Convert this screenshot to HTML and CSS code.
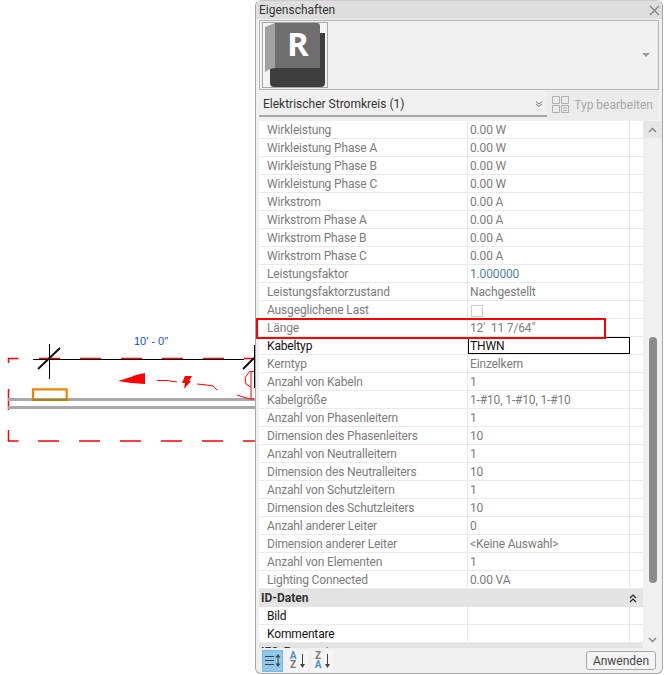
FILE: index.html
```html
<!DOCTYPE html>
<html lang="de">
<head>
    <meta charset="UTF-8">
    <title>Eigenschaften</title>
    <link rel="stylesheet" href="styles.css">
</head>
<body>
    <!-- Drawing area -->
    <div class="canvas">
        <svg class="drawing" width="255" height="675" viewBox="0 0 255 675">
            <g class="red-dash">
                <path d="M8.5 363V358.5H18.5M39 358.5H60M80 358.5H101M121 358.5H142M162 358.5H183M203 358.5H224M244 358.5H255"/>
                <path d="M8.5 389V410M8.5 430V441H18.5M38 441H59M79 441H100M120 441H141M161 441H182M202 441H223M243 441H255"/>
            </g>
            <path class="thin-black" d="M33 359.5H244M49.5 344V379M254.5 345V388"/>
            <path class="thick-black" d="M38 369L60 348M243 369L254 358"/>
            <rect class="wall" x="8" y="398" width="247" height="3"/>
            <rect class="wall" x="8" y="406" width="247" height="3"/>
            <path class="orange-top" d="M33 399V389.4H66.7V399"/>
            <path class="orange-bottom" d="M32 400H67.5"/>
            <polygon class="red-fill" points="118,381 131,377 136,375 145,373 145,384 131,383"/>
            <polygon class="red-fill" points="185,376 192,376 189,381 191,381 184,389 185,383 182,383"/>
            <path class="red-line" d="M157 380.5H167L177 382M197 384L207 385L213 386L217 390M237 395L250 399L254 399M254 371.5H249.5L245 378L246 384L250.5 387M251 371.5V399"/>
            <text class="dim-text" x="134" y="345">10' - 0"</text>
        </svg>
    </div>

    <!-- Properties palette -->
    <div class="palette">
        <div class="title-bar">
            <span>Eigenschaften</span>
            <svg class="close-icon" width="11" height="11" viewBox="0 0 11 11"><path d="M1 1L10 10M10 1L1 10"/></svg>
        </div>

        <div class="type-selector">
            <div class="type-thumb">
                <svg width="64" height="64" viewBox="0 0 64 64">
                    <path fill="#3e3e3e" d="M7 45H57V10H62V60Q62 64 58 64H11Q7 64 7 60Z"/>
                    <path fill="#6e6e6e" d="M12 0H54Q57 0 57 3V45H12Z"/>
                    <polygon fill="#a2a2a2" points="2,4 12,0 12,45 7,46 2,49"/>
                    <text class="logo-letter" x="24" y="33">R</text>
                </svg>
            </div>
            <span class="arrow-down"></span>
        </div>

        <div class="instance-row">
            <div class="instance-select">
                <span>Elektrischer Stromkreis (1)</span>
                <svg class="chevron" width="8" height="6" viewBox="0 0 8 6"><path d="M1 0.5L4 3L7 0.5M1 3L4 5.5L7 3"/></svg>
            </div>
            <div class="edit-type">
                <svg width="17" height="17" viewBox="0 0 17 17" class="edit-icon">
                    <path d="M0.5 0.5H7.5V7.5H0.5ZM9.5 0.5H16.5V7.5H9.5ZM0.5 9.5H7.5V16.5H0.5Z"/>
                    <path d="M9.5 9.5H16.5V16.5H9.5ZM11 12H15M11 14.5H15"/>
                </svg>
                <span>Typ bearbeiten</span>
            </div>
        </div>

        <div class="list-wrap">
            <div class="list">
                <div class="row"><div class="label">Wirkleistung</div><div class="value">0.00 W</div></div>
                <div class="row"><div class="label">Wirkleistung Phase A</div><div class="value">0.00 W</div></div>
                <div class="row"><div class="label">Wirkleistung Phase B</div><div class="value">0.00 W</div></div>
                <div class="row"><div class="label">Wirkleistung Phase C</div><div class="value">0.00 W</div></div>
                <div class="row"><div class="label">Wirkstrom</div><div class="value">0.00 A</div></div>
                <div class="row"><div class="label">Wirkstrom Phase A</div><div class="value">0.00 A</div></div>
                <div class="row"><div class="label">Wirkstrom Phase B</div><div class="value">0.00 A</div></div>
                <div class="row"><div class="label">Wirkstrom Phase C</div><div class="value">0.00 A</div></div>
                <div class="row"><div class="label">Leistungsfaktor</div><div class="value value-blue">1.000000</div></div>
                <div class="row"><div class="label">Leistungsfaktorzustand</div><div class="value">Nachgestellt</div></div>
                <div class="row"><div class="label">Ausgeglichene Last</div><div class="value"><span class="checkbox"></span></div></div>
                <div class="row"><div class="label">Länge</div><div class="value">12'&nbsp; 11 7/64"</div></div>
                <div class="row row-edit"><div class="label">Kabeltyp</div><div class="value">THWN</div></div>
                <div class="row"><div class="label">Kerntyp</div><div class="value">Einzelkern</div></div>
                <div class="row"><div class="label">Anzahl von Kabeln</div><div class="value">1</div></div>
                <div class="row"><div class="label">Kabelgröße</div><div class="value">1-#10, 1-#10, 1-#10</div></div>
                <div class="row"><div class="label">Anzahl von Phasenleitern</div><div class="value">1</div></div>
                <div class="row"><div class="label">Dimension des Phasenleiters</div><div class="value">10</div></div>
                <div class="row"><div class="label">Anzahl von Neutralleitern</div><div class="value">1</div></div>
                <div class="row"><div class="label">Dimension des Neutralleiters</div><div class="value">10</div></div>
                <div class="row"><div class="label">Anzahl von Schutzleitern</div><div class="value">1</div></div>
                <div class="row"><div class="label">Dimension des Schutzleiters</div><div class="value">10</div></div>
                <div class="row"><div class="label">Anzahl anderer Leiter</div><div class="value">0</div></div>
                <div class="row"><div class="label">Dimension anderer Leiter</div><div class="value">&lt;Keine Auswahl&gt;</div></div>
                <div class="row"><div class="label">Anzahl von Elementen</div><div class="value">1</div></div>
                <div class="row"><div class="label">Lighting Connected</div><div class="value">0.00 VA</div></div>
                <div class="group">
                    <span>ID-Daten</span>
                    <svg class="collapse" width="8" height="9" viewBox="0 0 8 9"><path d="M1 4L4 1L7 4M1 8L4 5L7 8"/></svg>
                </div>
                <div class="row row-active"><div class="label">Bild</div><div class="value"></div></div>
                <div class="row row-active"><div class="label">Kommentare</div><div class="value"></div></div>
                <div class="group"><span>IFC-Parameter</span></div>
            </div>
            <div class="scrollbar">
                <div class="scroll-btn"><svg width="9" height="6" viewBox="0 0 9 6"><path d="M1 5L4.5 1.5L8 5"/></svg></div>
                <div class="scroll-track"><div class="scroll-thumb"></div></div>
                <div class="scroll-btn"><svg width="9" height="6" viewBox="0 0 9 6"><path d="M1 1L4.5 4.5L8 1"/></svg></div>
            </div>
            <div class="highlight"></div>
        </div>

        <div class="tool-bar">
            <div class="tool tool-on">
                <svg width="17" height="15" viewBox="0 0 17 15"><path class="ic-dark" d="M1 3.5H10M1 7.5H10M1 11.5H10M14 2V13"/><path class="ic-fill" d="M11.5 4.5L14 1L16.5 4.5ZM11.5 10.5L14 14L16.5 10.5Z"/></svg>
            </div>
            <div class="tool tool-sort">
                <div class="sort-letters"><span class="az-blue">A</span><span class="az-gray">Z</span></div>
                <svg width="7" height="16" viewBox="0 0 7 16"><path class="ic-dark" d="M3.5 1V12"/><path class="ic-fill" d="M1 11L3.5 15L6 11Z"/></svg>
            </div>
            <div class="tool tool-sort">
                <div class="sort-letters"><span class="az-gray">Z</span><span class="az-blue">A</span></div>
                <svg width="7" height="16" viewBox="0 0 7 16"><path class="ic-dark" d="M3.5 1V12"/><path class="ic-fill" d="M1 11L3.5 15L6 11Z"/></svg>
            </div>
            <button class="apply">Anwenden</button>
        </div>
    </div>
</body>
</html>
```

FILE: styles.css
```css
body {
    margin: 0;
    background: #fff;
    font-family: 'Roboto', sans-serif;
    font-size: 12px;
    display: flex;
    height: 675px;
    overflow: hidden;
}

.canvas {
    width: 255px;
    flex-shrink: 0;
}

.drawing {
    display: block;
}

.red-dash path {
    fill: none;
    stroke: #f00;
    stroke-width: 1.5;
}

.thin-black {
    fill: none;
    stroke: #000;
    stroke-width: 1;
}

.thick-black {
    fill: none;
    stroke: #111;
    stroke-width: 2;
}

.wall {
    fill: #a8a8a8;
}

.orange-top {
    fill: none;
    stroke: #f08400;
    stroke-width: 2.2;
}

.orange-bottom {
    fill: none;
    stroke: #b08000;
    stroke-width: 2;
}

.red-fill {
    fill: #f00;
}

.red-line {
    fill: none;
    stroke: #f00;
    stroke-width: 1;
}

.dim-text {
    font-family: 'Liberation Sans', sans-serif;
    font-size: 11px;
    fill: #0a50c8;
}

/* palette */
.palette {
    width: 408px;
    height: 674px;
    box-sizing: border-box;
    background: #f0f0f0;
    border: 1px solid #a8a8a8;
    border-top-color: #ccc;
    border-radius: 6px;
    display: flex;
    flex-direction: column;
    padding: 0 3px;
}

.title-bar {
    height: 18px;
    margin: 0 -3px;
    padding: 0 2px 0 3px;
    background: #dedede;
    border-radius: 6px 6px 0 0;
    display: flex;
    justify-content: space-between;
    align-items: center;
    color: #333;
    flex-shrink: 0;
}

.close-icon path {
    fill: none;
    stroke: #808080;
    stroke-width: 1.2;
}

.type-selector {
    height: 70px;
    box-sizing: border-box;
    margin-top: 1px;
    border: 1px solid #b4b4b4;
    background: #f0f0f0;
    padding: 1px 2px;
    display: flex;
    justify-content: space-between;
    align-items: center;
    flex-shrink: 0;
}

.type-thumb {
    width: 66px;
    height: 66px;
    box-sizing: border-box;
    border: 1px solid #a8a8a8;
    background: #f4f4f4;
}

.type-thumb svg {
    display: block;
    overflow: visible;
}

.logo-letter {
    font-family: 'Open Sans', sans-serif;
    font-size: 33px;
    font-weight: 700;
    fill: #fff;
}

.arrow-down {
    width: 0;
    height: 0;
    border-left: 4px solid transparent;
    border-right: 4px solid transparent;
    border-top: 4px solid #999;
    margin-right: 6px;
}

.instance-row {
    height: 31px;
    display: flex;
    flex-shrink: 0;
    padding-top: 1px;
    box-sizing: border-box;
}

.instance-select {
    width: 290px;
    box-sizing: border-box;
    height: 26px;
    padding: 2px 4px 0;
    border-bottom: 2px solid #a8a8a8;
    display: flex;
    justify-content: space-between;
    align-items: center;
    color: #333;
}

.chevron path {
    fill: none;
    stroke: #777;
    stroke-width: 1;
}

.edit-type {
    flex: 1;
    display: flex;
    align-items: center;
    gap: 5px;
    padding: 0 6px 2px 5px;
    box-sizing: border-box;
    background: #ebebeb;
    height: 29px;
    color: #a8a8a8;
    white-space: nowrap;
}

.edit-icon path {
    fill: none;
    stroke: #b0b0b0;
    stroke-width: 1;
}

.list-wrap {
    position: relative;
    display: flex;
    height: 527px;
    flex-shrink: 0;
    margin-right: -3px;
}

.list {
    width: 384px;
    height: 100%;
    overflow: hidden;
    flex-shrink: 0;
    background: #fff;
}

.row {
    display: flex;
    height: 18px;
    box-sizing: border-box;
    border-bottom: 1px solid #eaeaea;
    line-height: 19px;
    letter-spacing: -0.15px;
    color: #7c7c7c;
}

.label {
    width: 209px;
    box-sizing: border-box;
    padding-left: 8px;
    border-right: 1px solid #eaeaea;
    white-space: nowrap;
}

.value {
    width: 162px;
    box-sizing: border-box;
    padding-left: 2px;
    border-right: 1px solid #eaeaea;
    white-space: nowrap;
}

.value-blue {
    color: #5a82a8;
}

.row-edit .label,
.row-active .label {
    color: #111;
}

.row-edit .value {
    border: 1px solid #000;
    color: #111;
    line-height: 17px;
    padding-left: 1px;
}

.checkbox {
    display: inline-block;
    width: 10px;
    height: 10px;
    border: 1px solid #ccc;
    margin: 4px 0 0 1px;
    vertical-align: top;
}

.group {
    height: 18px;
    background: #e4e4e4;
    display: flex;
    justify-content: space-between;
    align-items: center;
    padding: 0 6px 0 2px;
    font-weight: 700;
    color: #333;
}

.collapse path {
    fill: none;
    stroke: #222;
    stroke-width: 1.2;
}

.scrollbar {
    width: 19px;
    display: flex;
    flex-direction: column;
    background: #f0f0f0;
}

.scroll-btn {
    height: 17px;
    flex-shrink: 0;
    background: #e6e6e6;
    display: flex;
    align-items: center;
    justify-content: center;
}

.scroll-btn:last-child {
    background: #f0f0f0;
}

.scroll-btn path {
    fill: none;
    stroke: #888;
    stroke-width: 1.5;
}

.scroll-track {
    flex: 1;
    display: flex;
    justify-content: center;
    align-items: flex-end;
    padding-bottom: 48px;
}

.scroll-thumb {
    width: 8px;
    height: 246px;
    background: #8c8c8c;
    border-radius: 4px;
}

/* red mark over the Länge row */
.highlight {
    position: absolute;
    left: -3px;
    top: 197px;
    width: 350px;
    height: 21px;
    box-sizing: border-box;
    border: 2px solid #f00;
}

.tool-bar {
    height: 25px;
    display: flex;
    align-items: center;
    gap: 4px;
    padding: 0 2px 0 3px;
    flex-shrink: 0;
}

.tool {
    width: 21px;
    height: 22px;
    background: #f5f5f5;
    display: flex;
    align-items: center;
    justify-content: center;
    gap: 1px;
}

.tool-sort {
    justify-content: flex-start;
    padding-left: 1px;
    box-sizing: border-box;
}

.tool-on {
    background: #90c8ec;
    border: 1px solid #7fb8dc;
    box-sizing: border-box;
}

.ic-dark {
    fill: none;
    stroke: #444;
    stroke-width: 1;
}

.ic-fill {
    fill: #444;
}

.sort-letters {
    display: flex;
    flex-direction: column;
    width: 10px;
    font-size: 10px;
    line-height: 8.5px;
    font-weight: 700;
    text-align: center;
}

.az-blue {
    color: #4a90d0;
}

.az-gray {
    color: #777;
}

.apply {
    margin-left: auto;
    margin-right: 1px;
    width: 70px;
    height: 19px;
    padding: 0;
    background: #f4f4f4;
    border: 1px solid #a8a8a8;
    border-radius: 3px;
    font-family: 'Roboto', sans-serif;
    font-size: 12px;
    color: #444;
}
```
